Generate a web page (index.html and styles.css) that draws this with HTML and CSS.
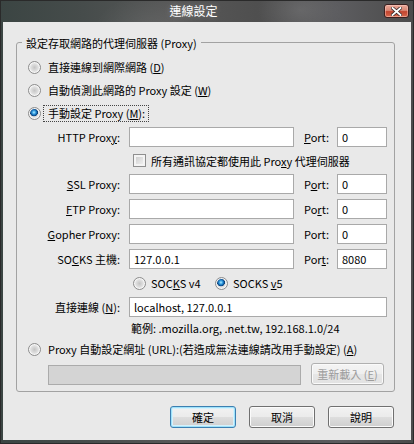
FILE: index.html
```html
<!DOCTYPE html>
<html lang="zh-Hant">
<head>
<meta charset="utf-8">
<title>連線設定</title>
<link rel="stylesheet" href="styles.css">
</head>
<body>
<div class="window">
  <div class="titlebar">
    <div class="title">連線設定</div>
    <button class="close" type="button" aria-label="關閉">
      <svg width="11" height="9" viewBox="0 0 11 9">
        <path d="M1.5 1 L9.5 8 M9.5 1 L1.5 8" stroke="#3a2a2a" stroke-width="3.4" stroke-linecap="square"/>
        <path d="M1.5 1 L9.5 8 M9.5 1 L1.5 8" stroke="#ffffff" stroke-width="1.8" stroke-linecap="square"/>
      </svg>
    </button>
  </div>
  <div class="client">
    <fieldset class="group">
      <legend>設定存取網路的代理伺服器 (Proxy)</legend>
      <label class="opt"><input class="radio" type="radio" name="mode"><span>直接連線到網際網路 (<u>D</u>)</span></label>
      <label class="opt"><input class="radio" type="radio" name="mode"><span>自動偵測此網路的 Proxy 設定 (<u>W</u>)</span></label>
      <label class="opt"><input class="radio" type="radio" name="mode" checked><span class="focus">手動設定 Proxy (<u>M</u>):</span></label>

      <div class="manual">
        <label class="lbl">HTTP Prox<u>y</u>:</label>
        <input class="txt" type="text" value="">
        <label class="plbl"><u>P</u>ort:</label>
        <input class="txt" type="text" value="0">

        <label class="chk"><input class="check" type="checkbox"><span>所有通訊協定都使用此 Pro<u>x</u>y 代理伺服器</span></label>

        <label class="lbl"><u>S</u>SL Proxy:</label>
        <input class="txt" type="text" value="">
        <label class="plbl">P<u>o</u>rt:</label>
        <input class="txt" type="text" value="0">

        <label class="lbl"><u>F</u>TP Proxy:</label>
        <input class="txt" type="text" value="">
        <label class="plbl">Po<u>r</u>t:</label>
        <input class="txt" type="text" value="0">

        <label class="lbl"><u>G</u>opher Proxy:</label>
        <input class="txt" type="text" value="">
        <label class="plbl">Port:</label>
        <input class="txt" type="text" value="0">

        <label class="lbl">SO<u>C</u>KS 主機:</label>
        <input class="txt" type="text" value="127.0.0.1">
        <label class="plbl">Por<u>t</u>:</label>
        <input class="txt" type="text" value="8080">

        <div class="socks">
          <label class="sopt v4"><input class="radio" type="radio" name="socks"><span>SOC<u>K</u>S v4</span></label>
          <label class="sopt"><input class="radio" type="radio" name="socks" checked><span>SOCKS <u>v</u>5</span></label>
        </div>

        <label class="lbl">直接連線 (<u>N</u>):</label>
        <input class="txt wide" type="text" value="localhost, 127.0.0.1">

        <div class="hint">範例: .mozilla.org, .net.tw, 192.168.1.0/24</div>
      </div>

      <label class="opt auto"><input class="radio" type="radio" name="mode"><span>Proxy 自動設定網址 (URL):(若造成無法連線請改用手動設定) (<u>A</u>)</span></label>
      <div class="pac">
        <input class="txt pacurl" type="text" value="" disabled>
        <button class="btn reload" type="button" disabled>重新載入 (<u>E</u>)</button>
      </div>
    </fieldset>

    <div class="buttons">
      <button class="btn default" type="button">確定</button>
      <button class="btn" type="button">取消</button>
      <button class="btn" type="button">說明</button>
    </div>
  </div>
</div>
</body>
</html>
```

FILE: styles.css
```css
* { box-sizing: border-box; }

html, body {
  margin: 0;
  padding: 0;
}

body {
  width: 414px;
  height: 444px;
  overflow: hidden;
  font-family: "Noto Sans CJK TC", "Noto Sans CJK SC", sans-serif;
  font-size: 11px;
  color: #000;
  background: #3a3a3a;
}

u {
  text-decoration: underline;
  text-underline-offset: 1px;
}

.window {
  width: 414px;
  height: 444px;
  display: flex;
  flex-direction: column;
  padding: 0 3px 4px 3px;
  background:
    radial-gradient(ellipse 60px 40px at 300px 10px, rgba(255,255,255,0.10), transparent 70%),
    radial-gradient(ellipse 80px 50px at 150px 30px, rgba(255,255,255,0.08), transparent 70%),
    linear-gradient(90deg, #3b4543 0%, #464c4b 20%, #585858 42%, #4f4f4f 62%, #5c5c5f 82%, #4b4b4b 100%);
  box-shadow: inset 0 0 0 1px #2a2a2a;
}

.titlebar {
  height: 22px;
  display: flex;
  align-items: center;
  flex: none;
}

.title {
  flex: 1;
  text-align: center;
  color: #fff;
  font-size: 12px;
  line-height: 16px;
  text-shadow: 0 0 6px rgba(255,255,255,0.25);
}

.close {
  width: 25px;
  height: 14px;
  margin: 0 2px 0 0;
  padding: 0;
  display: flex;
  align-items: center;
  justify-content: center;
  border: 1px solid #3b2020;
  border-radius: 3px;
  background: linear-gradient(#e9a898 0%, #d98775 45%, #c4452f 55%, #cf5a41 85%, #e07a60 100%);
  box-shadow: inset 0 0 0 1px rgba(255,210,200,0.45);
}

.client {
  flex: 1;
  display: flex;
  flex-direction: column;
  background: #e9e9e9;
  padding: 0 16px 0 13px;
}

.group {
  margin: 12px 0 0 0;
  padding: 7px 7px 6px 11px;
  min-width: 0;
  border: 1px solid #a2a2a2;
  border-radius: 3px;
}

.group legend {
  margin-left: -6px;
  padding: 2px 4px 0 4px;
  line-height: 14px;
}

.opt {
  display: flex;
  align-items: center;
  gap: 7px;
  height: 20px;
  white-space: nowrap;
}

.opt + .opt {
  margin-top: 3px;
}

.radio {
  appearance: none;
  -webkit-appearance: none;
  flex: none;
  width: 13px;
  height: 13px;
  margin: 0;
  border-radius: 50%;
  border: 1px solid #8c8c8c;
  background: radial-gradient(circle at 50% 50%, #c4c4c4 0, #dcdcdc 40%, #f3f3f3 80%);
  box-shadow: inset 0 0 0 1px #f7f7f7;
}

.radio:checked {
  background:
    radial-gradient(circle at 45% 40%, #b6ecff 0, #3aa4e4 1.6px, #0f5ea6 3px, #0a3f74 3.7px, transparent 4.2px),
    radial-gradient(circle at 50% 50%, #c4c4c4 0, #dcdcdc 40%, #f3f3f3 80%);
}

.check {
  appearance: none;
  -webkit-appearance: none;
  flex: none;
  width: 13px;
  height: 13px;
  margin: 0;
  border: 1px solid #8f8f8f;
  background: linear-gradient(135deg, #c6c6c6 0%, #e2e2e2 55%, #f6f6f6 100%);
  box-shadow: inset 0 0 0 2px #f4f4f4;
}

.focus {
  margin-left: -4px;
  padding: 0 3px 0 4px;
  line-height: 15px;
  outline: 1px dotted #444;
  outline-offset: 0;
}

.manual {
  margin-top: 4px;
  display: grid;
  grid-template-columns: 101px 165px 43px 50px;
  grid-template-rows: 20px 17px 20px 20px 20px 20px 18px 20px 12px;
  row-gap: 5px;
  align-items: center;
}

.lbl {
  text-align: right;
  padding-right: 9px;
  white-space: nowrap;
  line-height: 14px;
}

.plbl {
  padding-left: 10px;
  white-space: nowrap;
  line-height: 14px;
}

.txt {
  width: 100%;
  height: 20px;
  margin: 0;
  padding: 0 4px;
  border: 1px solid #a9a9a9;
  border-radius: 0;
  background: #fff;
  font: inherit;
  font-size: 11px;
  color: #000;
  outline: none;
}

.wide {
  grid-column: 2 / 5;
}

.chk {
  grid-column: 2 / 5;
  display: flex;
  align-items: center;
  gap: 5px;
  padding-left: 4px;
  white-space: nowrap;
  line-height: 14px;
}

.socks {
  grid-column: 2 / 5;
  display: flex;
  align-items: center;
  padding-left: 4px;
}

.sopt {
  display: flex;
  align-items: center;
  gap: 5px;
  line-height: 14px;
}

.sopt.v4 {
  width: 82px;
}

.hint {
  grid-column: 2 / 5;
  padding-left: 2px;
  line-height: 12px;
  white-space: nowrap;
}

.opt.auto {
  margin-top: 5px;
}

.pac {
  margin-top: 4px;
  padding-left: 20px;
  display: flex;
  align-items: flex-end;
  gap: 10px;
}

.pacurl {
  width: 253px;
  background: #d4d4d4;
  border-color: #ababab;
}

.btn {
  width: 66px;
  height: 22px;
  margin: 0;
  padding: 0;
  font: inherit;
  font-size: 11px;
  color: #000;
  border: 1px solid #707070;
  border-radius: 3px;
  background: linear-gradient(#f2f2f2 0%, #ebebeb 48%, #dddddd 52%, #cfcfcf 100%);
  box-shadow: inset 0 0 0 1px #fbfbfb;
}

.btn.default {
  border-color: #3c7fb1;
  box-shadow: inset 0 0 0 1px #9fe2fa, inset 0 0 0 2px #d6f1fc;
}

.btn.reload {
  width: 73px;
  color: #9c9c9c;
  border-color: #b0b0b0;
  background: linear-gradient(#f4f4f4 0%, #efefef 48%, #e6e6e6 52%, #e2e2e2 100%);
  box-shadow: inset 0 0 0 1px #fafafa;
}

.buttons {
  margin-top: 14px;
  display: flex;
  justify-content: flex-end;
  gap: 13px;
  padding-right: 1px;
}
```
